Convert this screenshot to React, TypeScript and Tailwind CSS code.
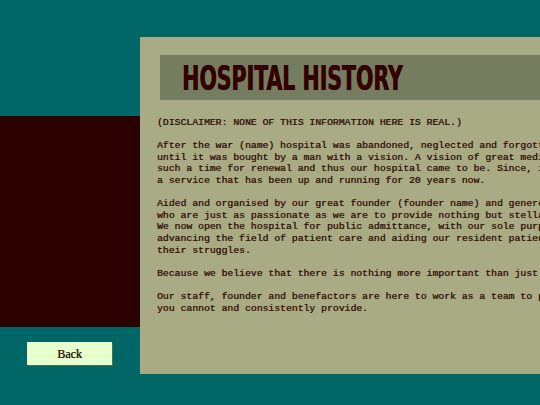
import React from "react";

const p1 = [
  "After the war (name) hospital was abandoned, neglected and forgotten",
  "until it was bought by a man with a vision. A vision of great medicine,",
  "such a time for renewal and thus our hospital came to be. Since, it has been",
  "a service that has been up and running for 20 years now.",
];
const p2 = [
  "Aided and organised by our great founder (founder name) and generous donors",
  "who are just as passionate as we are to provide nothing but stellar care.",
  "We now open the hospital for public admittance, with our sole purpose of",
  "advancing the field of patient care and aiding our resident patients in",
  "their struggles.",
];
const p3 = [
  "Because we believe that there is nothing more important than just care.",
];
const p4 = [
  "Our staff, founder and benefactors are here to work as a team to provide what",
  "you cannot and consistently provide.",
];

function Para({ lines }: { lines: string[] }) {
  return (
    <div className="mb-[11.6px]">
      {lines.map((l, i) => (
        <div key={i} className="whitespace-pre">
          {l}
        </div>
      ))}
    </div>
  );
}

export default function App() {
  return (
    <div className="w-[540px] h-[405px] overflow-hidden bg-[#006666] flex">
      <div className="w-[140px] shrink-0 flex flex-col pt-[116px]">
        <div className="h-[211px] bg-[#2b0000]" />
        <button className="mt-[15px] ml-[27px] w-[85px] h-[23px] bg-[#e6ffcc] shadow-[1px_1px_0_#4a6e5a] text-[12px] text-[#2e2418] font-['Liberation_Serif',serif] [text-shadow:0.3px_0_0_#2e2418] flex items-center justify-center">
          Back
        </button>
      </div>
      <div className="mt-[37px] h-[337px] w-[560px] shrink-0 bg-[#a8ab84] border-l border-t border-[rgba(168,171,132,0.5)] flex flex-col">
        <div className="mt-[17px] ml-[19px] h-[45px] bg-[#757d60] flex items-center pl-[22px] overflow-hidden">
          <span className="inline-block origin-left scale-x-[0.67] font-['DejaVu_Sans_Condensed','DejaVu_Sans',sans-serif] font-bold text-[34px] leading-none text-[#330000] [text-shadow:0.8px_0_0_#330000] whitespace-pre">
            HOSPITAL HISTORY
          </span>
        </div>
        <div className="mt-[17px] ml-[16px] font-['Liberation_Mono',monospace] text-[9.77px] leading-[11.6px] text-[#3b1a0e] [text-shadow:0.25px_0_0_#3b1a0e]">
          <Para lines={["(DISCLAIMER: NONE OF THIS INFORMATION HERE IS REAL.)"]} />
          <Para lines={p1} />
          <Para lines={p2} />
          <Para lines={p3} />
          <Para lines={p4} />
        </div>
      </div>
    </div>
  );
}
